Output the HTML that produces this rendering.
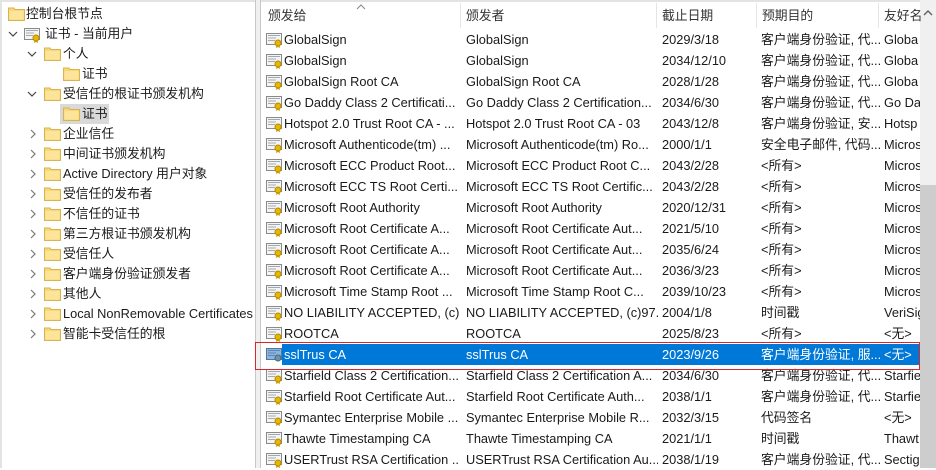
<!DOCTYPE html>
<html><head><meta charset="utf-8">
<style>
*{margin:0;padding:0;box-sizing:border-box}
body{width:936px;height:468px;overflow:hidden;background:#fff;font-family:"Liberation Sans","Noto Sans CJK SC",sans-serif;font-size:12.8px;color:#1a1a1a;position:relative}
.a{position:absolute;white-space:nowrap;line-height:20px}
.fold{position:absolute;width:17px;height:14px}
.chev{position:absolute;width:10px;height:10px}
.r{position:absolute;left:262px;width:658px;height:21px}
.r span{position:absolute;top:0;line-height:21px;white-space:nowrap;overflow:hidden}
.c1{left:22px;width:176px}.c2{left:204px;width:192px}.c3{left:400px}.c4{left:499px;width:120px}.c5{left:622px;width:36px}
.ic{position:absolute;left:4px;top:3px;width:17px;height:16px}
.sel{background:#0078d7;color:#fff}
.h{position:absolute;top:6px;line-height:20px;color:#333}
.sep{position:absolute;top:3px;width:1px;height:25px;background:#e5e5e5}
</style></head><body>
<div style="position:absolute;left:0;top:0;width:936px;height:2px;background:#e3e3e3"></div>
<div style="position:absolute;left:0;top:0;width:2px;height:468px;background:#e3e3e3"></div>
<div style="position:absolute;left:255px;top:0;width:6px;height:468px;background:#f0f0f0;border-left:1px solid #c8c8c8;border-right:1px solid #c8c8c8"></div>
<div style="position:absolute;left:920px;top:0;width:16px;height:468px;background:#f0f0f0"></div>
<div style="position:absolute;left:920px;top:185px;width:16px;height:283px;background:#cdcdcd"></div>
<svg style="position:absolute;left:922px;top:8px" width="12" height="10"><path d="M2 7 L6 3 L10 7" stroke="#606060" stroke-width="1.4" fill="none"/></svg>

<svg width="0" height="0" style="position:absolute">
<defs>
<symbol id="f" viewBox="0 0 17 14"><path d="M0.5 2.5 V1 H6 L7 2.5 H16.5 V13.5 H0.5 Z" fill="#f8d775" stroke="#d9b352"/><rect x="1.5" y="4" width="14" height="8.5" fill="#fce59a"/></symbol>
<symbol id="c" viewBox="0 0 17 16"><rect x="0.5" y="1.5" width="15" height="11" fill="#f4f4f4" stroke="#8a8a8a"/><rect x="2" y="3" width="12" height="1" fill="#9ab"/><rect x="2" y="5.5" width="8" height="1" fill="#aaa"/><rect x="2" y="8" width="7" height="1" fill="#aaa"/><circle cx="12" cy="11" r="3" fill="#e6b800" stroke="#b38a00"/><path d="M10.5 13 L10 16 L12 15 L14 16 L13.5 13" fill="#c89a00"/></symbol>
<symbol id="cs" viewBox="0 0 17 16"><rect x="0.5" y="1.5" width="15" height="11" fill="#8fb3d9" stroke="#4a78a8"/><rect x="2" y="3" width="12" height="1" fill="#5c86b8"/><rect x="2" y="5.5" width="8" height="1" fill="#5c86b8"/><rect x="2" y="8" width="7" height="1" fill="#5c86b8"/><circle cx="12" cy="11" r="3" fill="#6f93a0" stroke="#3d6a8a"/></symbol>
<symbol id="v" viewBox="0 0 10 10"><path d="M3 1 L7 5 L3 9" stroke="#777" stroke-width="1.2" fill="none"/></symbol>
<symbol id="d" viewBox="0 0 10 10"><path d="M1 3 L5 7 L9 3" stroke="#444" stroke-width="1.2" fill="none"/></symbol>
</defs></svg>

<svg class="fold" style="left:8px;top:7px"><use href="#f"/></svg><div class="a" style="left:26px;top:4px">控制台根节点</div>
<svg class="chev" style="left:8px;top:29px"><use href="#d"/></svg>
<svg style="position:absolute;left:24px;top:27px" width="17" height="16"><use href="#c"/></svg><div class="a" style="left:45px;top:24px">证书 - 当前用户</div>
<svg class="chev" style="left:27px;top:49px"><use href="#d"/></svg>
<svg class="fold" style="left:44px;top:47px"><use href="#f"/></svg><div class="a" style="left:63px;top:44px">个人</div>
<svg class="fold" style="left:63px;top:67px"><use href="#f"/></svg><div class="a" style="left:82px;top:64px">证书</div>
<svg class="chev" style="left:27px;top:89px"><use href="#d"/></svg>
<svg class="fold" style="left:44px;top:87px"><use href="#f"/></svg><div class="a" style="left:63px;top:84px">受信任的根证书颁发机构</div>
<div style="position:absolute;left:60px;top:104px;width:49px;height:20px;background:#d9d9d9"></div>
<svg class="fold" style="left:63px;top:107px"><use href="#f"/></svg><div class="a" style="left:82px;top:104px">证书</div>
<svg class="chev" style="left:28px;top:129px"><use href="#v"/></svg><svg class="fold" style="left:44px;top:127px"><use href="#f"/></svg><div class="a" style="left:63px;top:124px">企业信任</div>
<svg class="chev" style="left:28px;top:149px"><use href="#v"/></svg><svg class="fold" style="left:44px;top:147px"><use href="#f"/></svg><div class="a" style="left:63px;top:144px">中间证书颁发机构</div>
<svg class="chev" style="left:28px;top:169px"><use href="#v"/></svg><svg class="fold" style="left:44px;top:167px"><use href="#f"/></svg><div class="a" style="left:63px;top:164px">Active Directory 用户对象</div>
<svg class="chev" style="left:28px;top:189px"><use href="#v"/></svg><svg class="fold" style="left:44px;top:187px"><use href="#f"/></svg><div class="a" style="left:63px;top:184px">受信任的发布者</div>
<svg class="chev" style="left:28px;top:209px"><use href="#v"/></svg><svg class="fold" style="left:44px;top:207px"><use href="#f"/></svg><div class="a" style="left:63px;top:204px">不信任的证书</div>
<svg class="chev" style="left:28px;top:229px"><use href="#v"/></svg><svg class="fold" style="left:44px;top:227px"><use href="#f"/></svg><div class="a" style="left:63px;top:224px">第三方根证书颁发机构</div>
<svg class="chev" style="left:28px;top:249px"><use href="#v"/></svg><svg class="fold" style="left:44px;top:247px"><use href="#f"/></svg><div class="a" style="left:63px;top:244px">受信任人</div>
<svg class="chev" style="left:28px;top:269px"><use href="#v"/></svg><svg class="fold" style="left:44px;top:267px"><use href="#f"/></svg><div class="a" style="left:63px;top:264px">客户端身份验证颁发者</div>
<svg class="chev" style="left:28px;top:289px"><use href="#v"/></svg><svg class="fold" style="left:44px;top:287px"><use href="#f"/></svg><div class="a" style="left:63px;top:284px">其他人</div>
<svg class="chev" style="left:28px;top:309px"><use href="#v"/></svg><svg class="fold" style="left:44px;top:307px"><use href="#f"/></svg><div class="a" style="left:63px;top:304px">Local NonRemovable Certificates</div>
<svg class="chev" style="left:28px;top:329px"><use href="#v"/></svg><svg class="fold" style="left:44px;top:327px"><use href="#f"/></svg><div class="a" style="left:63px;top:324px">智能卡受信任的根</div>

<svg style="position:absolute;left:356px;top:4px" width="10" height="6"><path d="M1 5 L5 1 L9 5" stroke="#888" fill="none"/></svg>
<div class="h" style="left:268px">颁发给</div>
<div class="sep" style="left:460px"></div><div class="h" style="left:466px">颁发者</div>
<div class="sep" style="left:656px"></div><div class="h" style="left:662px">截止日期</div>
<div class="sep" style="left:756px"></div><div class="h" style="left:762px">预期目的</div>
<div class="sep" style="left:878px"></div><div class="h" style="left:884px">友好名</div>

<div class="r" style="top:29px"><svg class="ic"><use href="#c"/></svg><span class="c1">GlobalSign</span><span class="c2">GlobalSign</span><span class="c3">2029/3/18</span><span class="c4">客户端身份验证, 代...</span><span class="c5">Globa</span></div>
<div class="r" style="top:50px"><svg class="ic"><use href="#c"/></svg><span class="c1">GlobalSign</span><span class="c2">GlobalSign</span><span class="c3">2034/12/10</span><span class="c4">客户端身份验证, 代...</span><span class="c5">Globa</span></div>
<div class="r" style="top:71px"><svg class="ic"><use href="#c"/></svg><span class="c1">GlobalSign Root CA</span><span class="c2">GlobalSign Root CA</span><span class="c3">2028/1/28</span><span class="c4">客户端身份验证, 代...</span><span class="c5">Globa</span></div>
<div class="r" style="top:92px"><svg class="ic"><use href="#c"/></svg><span class="c1">Go Daddy Class 2 Certificati...</span><span class="c2">Go Daddy Class 2 Certification...</span><span class="c3">2034/6/30</span><span class="c4">客户端身份验证, 代...</span><span class="c5">Go Da</span></div>
<div class="r" style="top:113px"><svg class="ic"><use href="#c"/></svg><span class="c1">Hotspot 2.0 Trust Root CA - ...</span><span class="c2">Hotspot 2.0 Trust Root CA - 03</span><span class="c3">2043/12/8</span><span class="c4">客户端身份验证, 安...</span><span class="c5">Hotsp</span></div>
<div class="r" style="top:134px"><svg class="ic"><use href="#c"/></svg><span class="c1">Microsoft Authenticode(tm) ...</span><span class="c2">Microsoft Authenticode(tm) Ro...</span><span class="c3">2000/1/1</span><span class="c4">安全电子邮件, 代码...</span><span class="c5">Micros</span></div>
<div class="r" style="top:155px"><svg class="ic"><use href="#c"/></svg><span class="c1">Microsoft ECC Product Root...</span><span class="c2">Microsoft ECC Product Root C...</span><span class="c3">2043/2/28</span><span class="c4">&lt;所有&gt;</span><span class="c5">Micros</span></div>
<div class="r" style="top:176px"><svg class="ic"><use href="#c"/></svg><span class="c1">Microsoft ECC TS Root Certi...</span><span class="c2">Microsoft ECC TS Root Certific...</span><span class="c3">2043/2/28</span><span class="c4">&lt;所有&gt;</span><span class="c5">Micros</span></div>
<div class="r" style="top:197px"><svg class="ic"><use href="#c"/></svg><span class="c1">Microsoft Root Authority</span><span class="c2">Microsoft Root Authority</span><span class="c3">2020/12/31</span><span class="c4">&lt;所有&gt;</span><span class="c5">Micros</span></div>
<div class="r" style="top:218px"><svg class="ic"><use href="#c"/></svg><span class="c1">Microsoft Root Certificate A...</span><span class="c2">Microsoft Root Certificate Aut...</span><span class="c3">2021/5/10</span><span class="c4">&lt;所有&gt;</span><span class="c5">Micros</span></div>
<div class="r" style="top:239px"><svg class="ic"><use href="#c"/></svg><span class="c1">Microsoft Root Certificate A...</span><span class="c2">Microsoft Root Certificate Aut...</span><span class="c3">2035/6/24</span><span class="c4">&lt;所有&gt;</span><span class="c5">Micros</span></div>
<div class="r" style="top:260px"><svg class="ic"><use href="#c"/></svg><span class="c1">Microsoft Root Certificate A...</span><span class="c2">Microsoft Root Certificate Aut...</span><span class="c3">2036/3/23</span><span class="c4">&lt;所有&gt;</span><span class="c5">Micros</span></div>
<div class="r" style="top:281px"><svg class="ic"><use href="#c"/></svg><span class="c1">Microsoft Time Stamp Root ...</span><span class="c2">Microsoft Time Stamp Root C...</span><span class="c3">2039/10/23</span><span class="c4">&lt;所有&gt;</span><span class="c5">Micros</span></div>
<div class="r" style="top:302px"><svg class="ic"><use href="#c"/></svg><span class="c1">NO LIABILITY ACCEPTED, (c)...</span><span class="c2">NO LIABILITY ACCEPTED, (c)97...</span><span class="c3">2004/1/8</span><span class="c4">时间戳</span><span class="c5">VeriSig</span></div>
<div class="r" style="top:323px"><svg class="ic"><use href="#c"/></svg><span class="c1">ROOTCA</span><span class="c2">ROOTCA</span><span class="c3">2025/8/23</span><span class="c4">&lt;所有&gt;</span><span class="c5">&lt;无&gt;</span></div>
<div class="r" style="top:344px"><div class="sel" style="position:absolute;left:20px;top:0;width:638px;height:21px"></div><svg class="ic"><use href="#cs"/></svg><span class="c1" style="color:#fff">sslTrus CA</span><span class="c2" style="color:#fff">sslTrus CA</span><span class="c3" style="color:#fff">2023/9/26</span><span class="c4" style="color:#fff">客户端身份验证, 服...</span><span class="c5" style="color:#fff">&lt;无&gt;</span></div>
<div class="r" style="top:365px"><svg class="ic"><use href="#c"/></svg><span class="c1">Starfield Class 2 Certification...</span><span class="c2">Starfield Class 2 Certification A...</span><span class="c3">2034/6/30</span><span class="c4">客户端身份验证, 代...</span><span class="c5">Starfie</span></div>
<div class="r" style="top:386px"><svg class="ic"><use href="#c"/></svg><span class="c1">Starfield Root Certificate Aut...</span><span class="c2">Starfield Root Certificate Auth...</span><span class="c3">2038/1/1</span><span class="c4">客户端身份验证, 代...</span><span class="c5">Starfie</span></div>
<div class="r" style="top:407px"><svg class="ic"><use href="#c"/></svg><span class="c1">Symantec Enterprise Mobile ...</span><span class="c2">Symantec Enterprise Mobile R...</span><span class="c3">2032/3/15</span><span class="c4">代码签名</span><span class="c5">&lt;无&gt;</span></div>
<div class="r" style="top:428px"><svg class="ic"><use href="#c"/></svg><span class="c1">Thawte Timestamping CA</span><span class="c2">Thawte Timestamping CA</span><span class="c3">2021/1/1</span><span class="c4">时间戳</span><span class="c5">Thawt</span></div>
<div class="r" style="top:449px"><svg class="ic"><use href="#c"/></svg><span class="c1">USERTrust RSA Certification ...</span><span class="c2">USERTrust RSA Certification Au...</span><span class="c3">2038/1/19</span><span class="c4">客户端身份验证, 代...</span><span class="c5">Sectig</span></div>

<div style="position:absolute;left:255px;top:342px;width:665px;height:28px;border:1px solid #d9262c"></div>
</body></html>
